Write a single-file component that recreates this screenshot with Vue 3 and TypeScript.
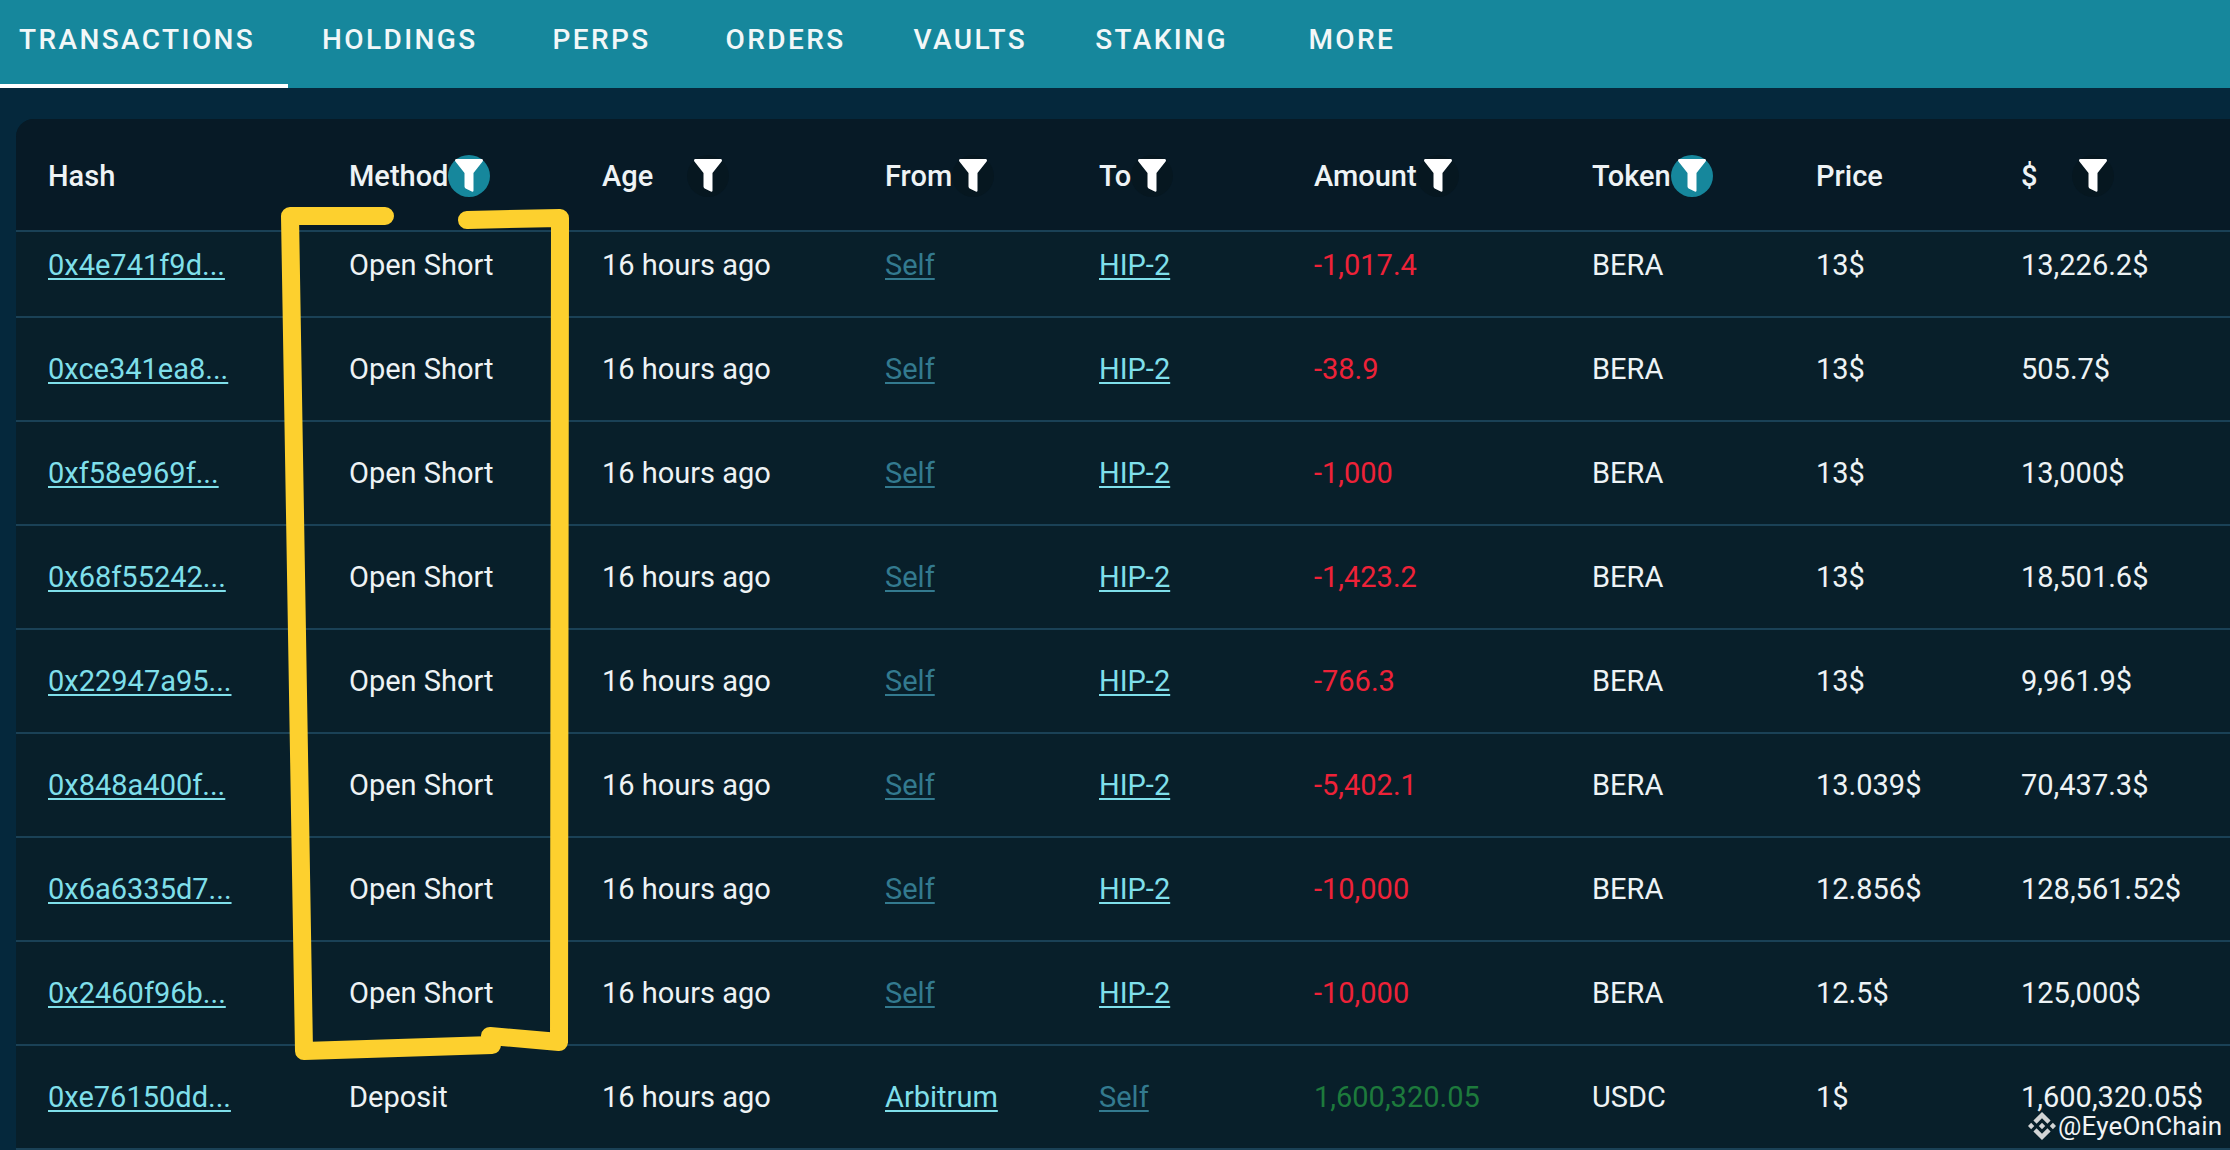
<script setup lang="ts">
interface Row {
  hash: string
  method: string
  from: string
  to: string
  amount: string
  token: string
  price: string
  usd: string
}

const tabs = ['TRANSACTIONS', 'HOLDINGS', 'PERPS', 'ORDERS', 'VAULTS', 'STAKING', 'MORE']

const columns = [
  { label: 'Hash', filter: false, active: false, cls: '' },
  { label: 'Method', filter: true, active: true, cls: '' },
  { label: 'Age', filter: true, active: false, cls: 'wide-age' },
  { label: 'From', filter: true, active: false, cls: '' },
  { label: 'To', filter: true, active: false, cls: '' },
  { label: 'Amount', filter: true, active: false, cls: '' },
  { label: 'Token', filter: true, active: true, cls: '' },
  { label: 'Price', filter: false, active: false, cls: '' },
  { label: '$', filter: true, active: false, cls: 'wide-usd' },
]

const short = (hash: string, amount: string, price: string, usd: string): Row => ({
  hash,
  method: 'Open Short',
  from: 'Self',
  to: 'HIP-2',
  amount,
  token: 'BERA',
  price,
  usd,
})

const rows: Row[] = [
  short('0x4e741f9d...', '-1,017.4', '13$', '13,226.2$'),
  short('0xce341ea8...', '-38.9', '13$', '505.7$'),
  short('0xf58e969f...', '-1,000', '13$', '13,000$'),
  short('0x68f55242...', '-1,423.2', '13$', '18,501.6$'),
  short('0x22947a95...', '-766.3', '13$', '9,961.9$'),
  short('0x848a400f...', '-5,402.1', '13.039$', '70,437.3$'),
  short('0x6a6335d7...', '-10,000', '12.856$', '128,561.52$'),
  short('0x2460f96b...', '-10,000', '12.5$', '125,000$'),
  {
    hash: '0xe76150dd...',
    method: 'Deposit',
    from: 'Arbitrum',
    to: 'Self',
    amount: '1,600,320.05',
    token: 'USDC',
    price: '1$',
    usd: '1,600,320.05$',
  },
]
</script>

<template>
  <div class="page">
    <nav class="tabs">
      <a v-for="(t, i) in tabs" :key="t" class="tab" :class="{ current: i === 0 }">{{ t }}</a>
    </nav>

    <section class="card">
      <div class="grid head">
        <div v-for="c in columns" :key="c.label" class="hcell">
          <span class="hlabel" :class="c.cls">{{ c.label }}</span>
          <span v-if="c.filter" class="filter" :class="{ on: c.active }">
            <svg width="28" height="33" viewBox="0 0 28 33">
              <path d="M1.5 0H26.5C27.8 0 28.4 1.4 27.6 2.4L18.5 14V31.5C18.5 32.6 17.6 33 16.8 32.6L10.6 29.4C9.9 29 9.5 28.4 9.5 27.6V14L0.4 2.4C-0.4 1.4 0.2 0 1.5 0Z" fill="#fff" />
            </svg>
          </span>
        </div>
      </div>

      <div v-for="(r, i) in rows" :key="r.hash" class="grid row" :class="{ clipped: i === 0 }">
        <div><a class="link">{{ r.hash }}</a></div>
        <div>{{ r.method }}</div>
        <div>16 hours ago</div>
        <div><a class="link" :class="{ dim: r.from === 'Self' }">{{ r.from }}</a></div>
        <div><a class="link" :class="{ dim: r.to === 'Self' }">{{ r.to }}</a></div>
        <div :class="r.amount.startsWith('-') ? 'neg' : 'pos'">{{ r.amount }}</div>
        <div>{{ r.token }}</div>
        <div>{{ r.price }}</div>
        <div>{{ r.usd }}</div>
      </div>
    </section>

    <svg class="marker" width="2230" height="1150" viewBox="0 0 2230 1150" fill="none">
      <path d="M385 216L290 216L304 1051L492 1045" stroke="#fdd02e" stroke-width="18" stroke-linecap="round" stroke-linejoin="round" />
      <path d="M490 1036L559 1042L560 218L467 220" stroke="#fdd02e" stroke-width="18" stroke-linecap="round" stroke-linejoin="round" />
    </svg>

    <div class="mark">
      <svg width="28" height="28" viewBox="0 0 126.61 126.61">
        <path fill="#d2d4d5" d="M38.73 53.2l24.59-24.58 24.6 24.6 14.3-14.31L63.32 0 24.43 38.9 38.73 53.2zM0 63.31l14.3-14.31 14.31 14.31-14.31 14.3zM38.73 73.41l24.59 24.59 24.6-24.6 14.31 14.29-38.9 38.91-38.91-38.88-.02-.02 14.33-14.29zM98.28 63.32l14.3-14.31 14.31 14.3-14.31 14.31zM77.83 63.31L63.32 48.78 52.59 59.51l-1.24 1.23-2.54 2.54 14.51 14.52 14.51-14.51z" />
      </svg>
      <span>@EyeOnChain</span>
    </div>
  </div>
</template>

<style>
html, body { margin: 0; background: #05283c; overflow: hidden; }
</style>

<style scoped>
.page {
  position: relative;
  width: 2230px;
  height: 1150px;
  overflow: hidden;
  background: #05283c;
  font-family: Roboto, "Liberation Sans", sans-serif;
  color: #eef3f5;
}
.tabs {
  display: flex;
  height: 88px;
  background: #16879c;
}
.tab {
  box-sizing: border-box;
  height: 88px;
  min-width: 180px;
  padding: 0 34px;
  line-height: 80px;
  text-align: center;
  font-size: 28px;
  font-weight: 500;
  letter-spacing: 2.4px;
  color: #f2f7f8;
  white-space: nowrap;
}
.tab.current {
  width: 288px;
  padding-left: 19px;
  padding-right: 0;
  text-align: left;
  border-bottom: 4px solid #fff;
}
.card {
  margin: 31px 0 0 16px;
  border-radius: 18px 0 0 0;
  background: #081f2a;
  overflow: hidden;
}
.grid {
  display: grid;
  grid-template-columns: 301px 253px 283px 214px 215px 278px 224px 205px 1fr;
  padding-left: 32px;
  align-items: center;
  font-size: 29px;
  border-bottom: 2px solid #1a4156;
  box-sizing: border-box;
}
.head {
  height: 113px;
  padding-top: 2px;
  background: #071a26;
  font-weight: 500;
}
.hcell { display: flex; align-items: center; }
.hlabel.wide-age { min-width: 85px; }
.hlabel.wide-usd { min-width: 51px; }
.filter {
  display: flex;
  width: 42px;
  height: 42px;
  border-radius: 50%;
  align-items: center;
  justify-content: center;
  background: #061720;
}
.filter.on { background: #16879c; }
.row { height: 104px; }
.row.clipped { height: 86px; padding-bottom: 18px; }
.link {
  color: #7fdfea;
  text-decoration: underline;
  text-underline-offset: 3px;
}
.link.dim { color: #337a8f; }
.neg { color: #ee2238; }
.pos { color: #1d7a3c; }
.marker {
  position: absolute;
  left: 0;
  top: 0;
  pointer-events: none;
}
.mark {
  position: absolute;
  left: 2028px;
  top: 1111px;
  display: flex;
  align-items: center;
  gap: 2px;
  font-size: 26px;
  letter-spacing: 0.2px;
  color: #f1f3f4;
}
</style>
